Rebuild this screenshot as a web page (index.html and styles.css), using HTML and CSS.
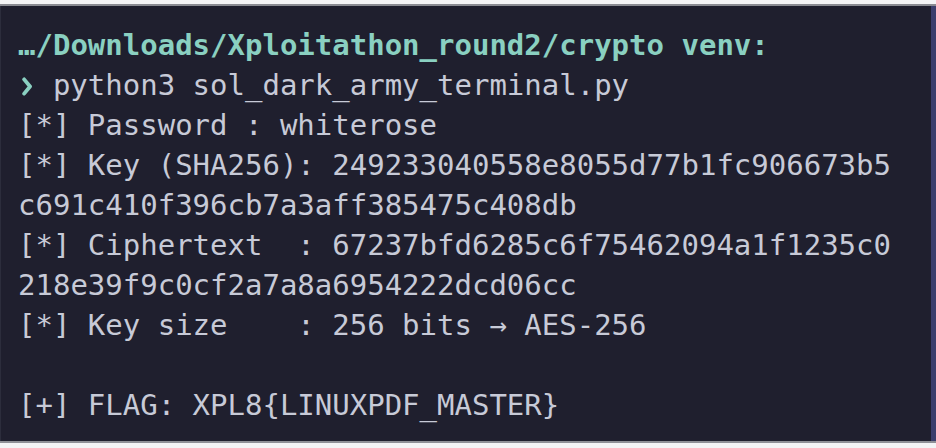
FILE: index.html
```html
<!DOCTYPE html>
<html>
<head>
<meta charset="utf-8">
<link rel="stylesheet" href="styles.css">
</head>
<body>
<div class="frame">
  <div class="terminal">
    <div class="line path">…/Downloads/Xploitathon_round2/crypto venv:</div>
    <div class="line"><span class="prompt"><svg class="chev" viewBox="0 0 12 20" width="12" height="19"><path d="M3 2.5 L9.2 10 L3 17.5" fill="none" stroke="#8ad0c1" stroke-width="4" stroke-linecap="round" stroke-linejoin="round"/></svg></span> python3 sol_dark_army_terminal.py</div>
    <div class="line">[*] Password : whiterose</div>
    <div class="line">[*] Key (SHA256): 249233040558e8055d77b1fc906673b5</div>
    <div class="line">c691c410f396cb7a3aff385475c408db</div>
    <div class="line">[*] Ciphertext  : 67237bfd6285c6f75462094a1f1235c0</div>
    <div class="line">218e39f9c0cf2a7a8a6954222dcd06cc</div>
    <div class="line">[*] Key size    : 256 bits → AES-256</div>
    <div class="line"> </div>
    <div class="line">[+] FLAG: XPL8{LINUXPDF_MASTER}</div>
  </div>
  <div class="edge"></div>
</div>
</body>
</html>
```

FILE: styles.css
```css
html, body {
  margin: 0;
  padding: 0;
  background: #f4f4f6;
  width: 936px;
  height: 448px;
  overflow: hidden;
}
.frame {
  margin-top: 4px;
  display: flex;
  height: 435px;
  border-top: 2px solid #8a8b92;
  border-bottom: 2px solid #8f9097;
  background: #1f1f2e;
}
.terminal {
  flex: 1;
  border-left: 1px solid #2c2d3c;
  padding: 19px 0 0 17px;
  font-family: "DejaVu Sans Mono", monospace;
  font-size: 29px;
  line-height: 40px;
  color: #c7cad7;
}
.line {
  height: 40px;
  white-space: pre;
}
.path {
  color: #8ad0c1;
  font-weight: bold;
}
.prompt {
  display: inline-block;
  width: 1ch;
  text-align: center;
}
.chev {
  vertical-align: -1px;
}
.edge {
  width: 5px;
  background: #3b3e6c;
}
```
